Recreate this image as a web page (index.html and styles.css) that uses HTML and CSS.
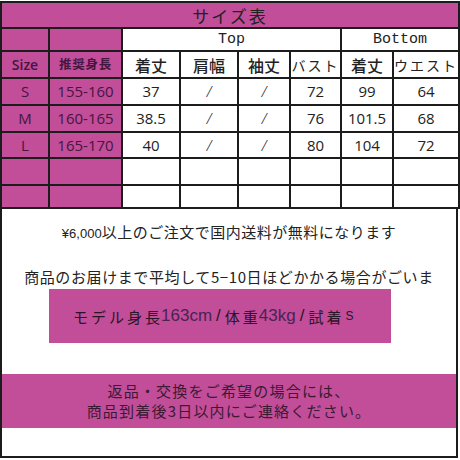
FILE: index.html
```html
<!DOCTYPE html>
<html lang="ja">
<head>
<meta charset="utf-8">
<link rel="stylesheet" href="styles.css">
</head>
<body>
<div class="sheet">
  <table class="size-table">
    <colgroup>
      <col class="c1"><col class="c2"><col class="c3"><col class="c4">
      <col class="c5"><col class="c6"><col class="c7"><col class="c8">
    </colgroup>
    <tr class="r-title"><th colspan="8" class="mag title">サイズ表</th></tr>
    <tr class="r-group">
      <td class="mag"></td><td class="mag"></td>
      <td colspan="4" class="group">Top</td>
      <td colspan="2" class="group">Bottom</td>
    </tr>
    <tr class="r-head">
      <td class="mag lbl-size">Size</td>
      <td class="mag lbl-h">推奨身長</td>
      <td class="hd">着丈</td>
      <td class="hd">肩幅</td>
      <td class="hd">袖丈</td>
      <td class="hd hd-kana">バスト</td>
      <td class="hd">着丈</td>
      <td class="hd hd-kana">ウエスト</td>
    </tr>
    <tr class="r-data">
      <td class="mag sz">S</td><td class="mag rng">155-160</td>
      <td class="num">37</td><td class="sl">/</td><td class="sl">/</td>
      <td class="num">72</td><td class="num">99</td><td class="num">64</td>
    </tr>
    <tr class="r-data">
      <td class="mag sz">M</td><td class="mag rng">160-165</td>
      <td class="num">38.5</td><td class="sl">/</td><td class="sl">/</td>
      <td class="num">76</td><td class="num">101.5</td><td class="num">68</td>
    </tr>
    <tr class="r-data r-l">
      <td class="mag sz">L</td><td class="mag rng">165-170</td>
      <td class="num">40</td><td class="sl">/</td><td class="sl">/</td>
      <td class="num">80</td><td class="num">104</td><td class="num">72</td>
    </tr>
    <tr class="r-empty">
      <td class="mag"></td><td class="mag"></td>
      <td></td><td></td><td></td><td></td><td></td><td></td>
    </tr>
    <tr class="r-empty r-last">
      <td class="mag"></td><td class="mag"></td>
      <td></td><td></td><td></td><td></td><td></td><td></td>
    </tr>
  </table>
  <div class="notes">
    <p class="note note-1"><span class="yen">¥6,000</span>以上のご注文で国内送料が無料になります</p>
    <p class="note note-2">商品のお届けまで平均して5−10日ほどかかる場合がごいま</p>
    <div class="model">
      <span class="jp">モデル身長</span><span class="lat">163cm</span><span class="sep">/</span><span class="jp">体重</span><span class="lat">43kg</span><span class="sep">/</span><span class="jp">試着</span><span class="small-s">S</span>
    </div>
    <div class="band">
      <p>返品・交換をご希望の場合には、</p>
      <p>商品到着後3日以内にご連絡ください。</p>
    </div>
  </div>
</div>
</body>
</html>
```

FILE: styles.css
```css
* { box-sizing: border-box; }
html, body { margin: 0; padding: 0; background: #fff; }
body {
  width: 460px;
  height: 460px;
  overflow: hidden;
  font-family: "Noto Sans CJK JP", "Noto Sans", sans-serif;
  color: #222;
}
.sheet {
  width: 459px;
  padding-top: 1px;
}
.size-table {
  width: 458px;
  border-collapse: collapse;
  table-layout: fixed;
}
.c1 { width: 48px; }
.c2 { width: 73px; }
.c3 { width: 58px; }
.c4 { width: 58px; }
.c5 { width: 52px; }
.c6 { width: 51px; }
.c7 { width: 52px; }
.c8 { width: 66px; }

.size-table th,
.size-table td {
  border: 2px solid #1c1c1c;
  padding: 0;
  text-align: center;
  vertical-align: middle;
  white-space: nowrap;
  overflow: hidden;
  line-height: 1;
}
.mag { background: #c24d99; color: #45163f; }

.r-title { height: 26px; }
.r-group { height: 23px; }
.r-head { height: 27px; }
.r-data { height: 27px; }
.r-l { height: 26px; }
.r-empty { height: 27px; }
.r-last { height: 23px; }

.title {
  font-weight: 400;
  font-size: 17px;
  letter-spacing: 2px;
  color: #222;
  font-family: "Noto Sans CJK JP", sans-serif;
}
.group {
  font-family: "Liberation Mono", "DejaVu Sans Mono", monospace;
  font-size: 15px;
  color: #222;
}
.hd {
  font-size: 16px;
  font-weight: 500;
  color: #222;
}
.hd-kana {
  text-align: left;
  font-size: 14px;
  font-weight: 400;
  letter-spacing: 2px;
  text-overflow: clip;
}
.lbl-size {
  font-family: "Open Sans", "Liberation Sans", sans-serif;
  font-size: 14px;
  font-weight: 600;
}
.lbl-h {
  font-size: 12.5px;
  font-weight: 700;
  letter-spacing: 0.8px;
}
.sz, .rng, .num {
  font-family: "Open Sans", "Liberation Sans", sans-serif;
  font-size: 15px;
}
.sz, .rng { color: #45163f; }
.num { color: #222; }
.sl {
  font-family: "Liberation Serif", serif;
  font-size: 17px;
  font-style: italic;
  color: #333;
}

.notes {
  width: 458px;
  height: 249px;
  border: 2px solid #1c1c1c;
  border-top: none;
  display: flex;
  flex-direction: column;
  align-items: stretch;
}
.note {
  margin: 0;
  height: 20px;
  line-height: 20px;
  text-align: center;
  font-size: 15px;
  letter-spacing: 0.5px;
  color: #222;
}
.note-1 { margin-top: 13px; }
.note-2 { margin-top: 25px; letter-spacing: 0.6px; }
.yen {
  font-family: "Liberation Sans", sans-serif;
  font-size: 13px;
  letter-spacing: 0;
}
.model {
  margin: 2px 0 0 47px;
  width: 342px;
  height: 54px;
  background: #c24d99;
  display: flex;
  align-items: center;
  padding-left: 24px;
  color: #2a1526;
}
.model .jp {
  font-size: 15px;
  letter-spacing: 3px;
  font-weight: 400;
}
.model .lat {
  font-family: "Liberation Sans", sans-serif;
  font-size: 17px;
  color: #4a2352;
  margin-left: -2px;
}
.model .sep {
  font-family: "Liberation Sans", sans-serif;
  font-size: 17px;
  margin: 0 4px 0 4px;
  color: #2a1526;
}
.model .small-s {
  font-family: "Liberation Sans", sans-serif;
  font-size: 12px;
  margin-left: 1px;
}
.band {
  margin-top: 31px;
  height: 54px;
  background: #c24d99;
  display: flex;
  flex-direction: column;
  justify-content: center;
  align-items: center;
  color: #3a1a33;
}
.band p {
  margin: 0;
  height: 20px;
  line-height: 20px;
  font-size: 15px;
  letter-spacing: 1.2px;
}
```
